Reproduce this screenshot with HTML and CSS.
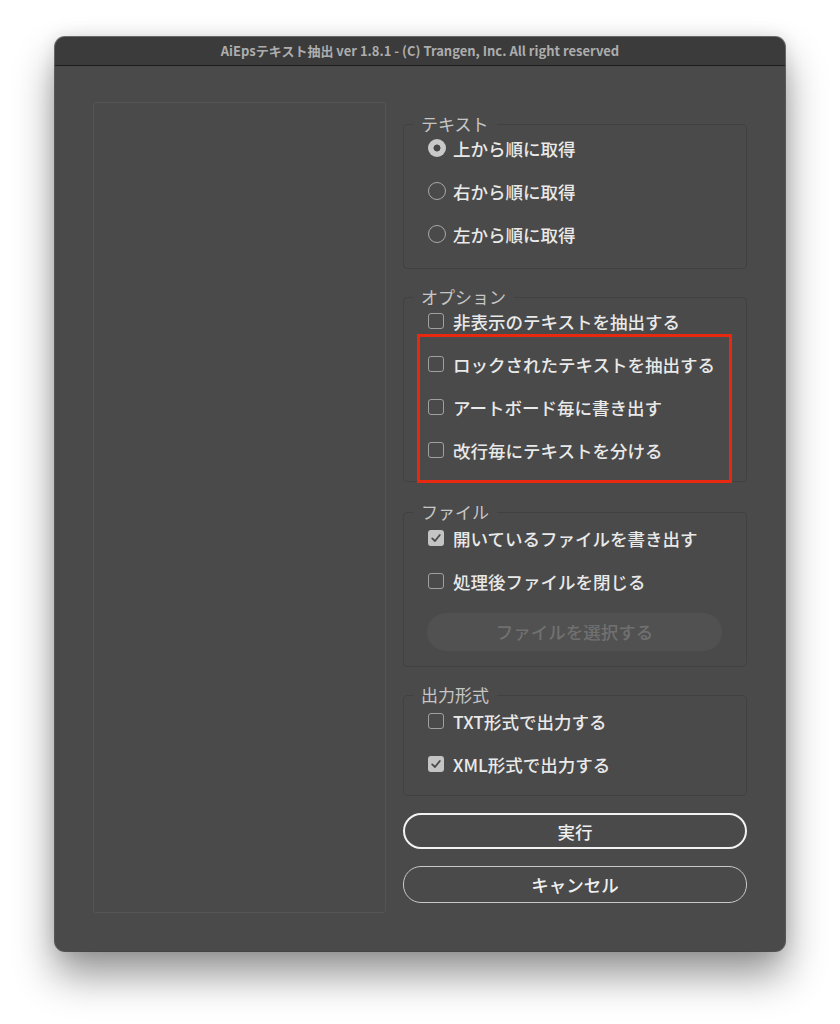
FILE: index.html
```html
<!DOCTYPE html>
<html lang="ja">
<head>
<meta charset="utf-8">
<link rel="stylesheet" href="styles.css">
</head>
<body>
<div class="window">
  <div class="titlebar">AiEpsテキスト抽出 ver 1.8.1 - (C) Trangen, Inc. All right reserved</div>
  <div class="content">
    <div class="preview"></div>
    <div class="controls">
      <fieldset class="group g-text">
        <legend>テキスト</legend>
        <div class="row"><span class="ctl"><span class="radio on"></span></span>上から順に取得</div>
        <div class="row"><span class="ctl"><span class="radio"></span></span>右から順に取得</div>
        <div class="row"><span class="ctl"><span class="radio"></span></span>左から順に取得</div>
      </fieldset>
      <fieldset class="group g-opt">
        <legend>オプション</legend>
        <div class="row"><span class="ctl"><span class="check"></span></span>非表示のテキストを抽出する</div>
        <div class="rows highlight">
          <div class="row"><span class="ctl"><span class="check"></span></span>ロックされたテキストを抽出する</div>
          <div class="row"><span class="ctl"><span class="check"></span></span>アートボード毎に書き出す</div>
          <div class="row"><span class="ctl"><span class="check"></span></span>改行毎にテキストを分ける</div>
          <span class="redbox"></span>
        </div>
      </fieldset>
      <fieldset class="group g-file">
        <legend>ファイル</legend>
        <div class="row"><span class="ctl"><span class="check on"><svg viewBox="0 0 16 16" width="16" height="16"><polyline points="4.2,8.4 7,11 11.8,5" fill="none" stroke="#4a4a4a" stroke-width="1.8" stroke-linecap="round" stroke-linejoin="round"/></svg></span></span>開いているファイルを書き出す</div>
        <div class="row"><span class="ctl"><span class="check"></span></span>処理後ファイルを閉じる</div>
        <div class="select-btn">ファイルを選択する</div>
      </fieldset>
      <fieldset class="group g-out">
        <legend>出力形式</legend>
        <div class="row"><span class="ctl"><span class="check"></span></span>TXT形式で出力する</div>
        <div class="row"><span class="ctl"><span class="check on"><svg viewBox="0 0 16 16" width="16" height="16"><polyline points="4.2,8.4 7,11 11.8,5" fill="none" stroke="#4a4a4a" stroke-width="1.8" stroke-linecap="round" stroke-linejoin="round"/></svg></span></span>XML形式で出力する</div>
      </fieldset>
      <div class="btn primary">実行</div>
      <div class="btn secondary">キャンセル</div>
    </div>
  </div>
</div>
</body>
</html>
```

FILE: styles.css
```css
html, body {
  margin: 0;
  padding: 0;
  background: #ffffff;
}
body {
  width: 840px;
  height: 1024px;
  overflow: hidden;
  font-family: "Noto Sans CJK JP", "Noto Sans", sans-serif;
}
.window {
  margin: 37px 0 0 55px;
  width: 730px;
  height: 914px;
  border-radius: 10px;
  background: #4a4a4a;
  overflow: hidden;
  box-shadow: 0 0 0 1px rgba(0,0,0,0.55), 0 24px 40px rgba(0,0,0,0.42), 0 0 18px rgba(0,0,0,0.12);
  display: flex;
  flex-direction: column;
}
.titlebar {
  height: 28px;
  flex: none;
  background: #3b3b3b;
  border-bottom: 1px solid #1c1c1c;
  color: #adadad;
  font-family: "Noto Sans CJK JP", "Liberation Sans", sans-serif;
  font-weight: 700;
  font-size: 13px;
  line-height: 28px;
  text-align: center;
}
.content {
  flex: 1;
  display: flex;
  gap: 17px;
  padding: 36px 38px 38px 38px;
}
.preview {
  width: 293px;
  flex: none;
  box-sizing: border-box;
  border: 1px solid #555555;
  border-radius: 3px;
}
.controls {
  flex: 1;
  margin-top: 12px;
  display: flex;
  flex-direction: column;
}
.group {
  margin: 0 0 18px 0;
  padding: 4px 10px 18px 9px;
  min-width: 0;
  border: 1px solid #414141;
  border-radius: 4px;
  display: flex;
  flex-direction: column;
  gap: 19px;
}
.g-text { padding-top: 2px; padding-bottom: 22px; }
.g-opt { padding-top: 2px; padding-bottom: 19px; margin-bottom: 20px; }
.g-file { padding-bottom: 15px; }
.g-out { padding-bottom: 19px; margin-bottom: 17px; }
.group legend {
  padding: 0 8px;
  font-size: 17px;
  line-height: 20px;
  color: #c6c6c6;
}
.rows {
  display: flex;
  flex-direction: column;
  gap: 19px;
}
.highlight { position: relative; }
.redbox {
  position: absolute;
  left: 4px;
  right: 4px;
  top: -18px;
  bottom: -21px;
  border: 3px solid #e8290f;
}
.row {
  display: flex;
  align-items: center;
  height: 24px;
  padding-left: 15px;
  font-size: 17.5px;
  font-weight: 500;
  color: #e9e9e9;
  white-space: nowrap;
}
.ctl {
  width: 18px;
  height: 18px;
  margin-right: 7px;
  display: flex;
  align-items: center;
  flex: none;
}
.radio {
  width: 18px;
  height: 18px;
  box-sizing: border-box;
  border-radius: 50%;
  border: 1.5px solid #a9a9a9;
}
.radio.on {
  border: none;
  background: radial-gradient(circle, #474747 0 3.2px, #c9c9c9 3.8px);
}
.check {
  width: 16px;
  height: 16px;
  box-sizing: border-box;
  border: 1.5px solid #a0a0a0;
  border-radius: 3px;
  display: block;
}
.check.on {
  border: none;
  background: #c4c4c4;
}
.check svg { display: block; }
.select-btn {
  margin: 1px 14px 0 14px;
  height: 38px;
  border-radius: 19px;
  background: #515151;
  color: #707070;
  font-size: 17.5px;
  font-weight: 500;
  line-height: 38px;
  text-align: center;
}
.btn {
  height: 36px;
  box-sizing: border-box;
  border-radius: 18px;
  color: #f0f0f0;
  font-size: 17.5px;
  font-weight: 500;
  text-align: center;
  display: flex;
  align-items: center;
  justify-content: center;
}
.primary {
  border: 2.5px solid #f2f2f2;
}
.secondary {
  margin-top: 17px;
  height: 37px;
  border: 1.5px solid #c9c9c9;
}
```
